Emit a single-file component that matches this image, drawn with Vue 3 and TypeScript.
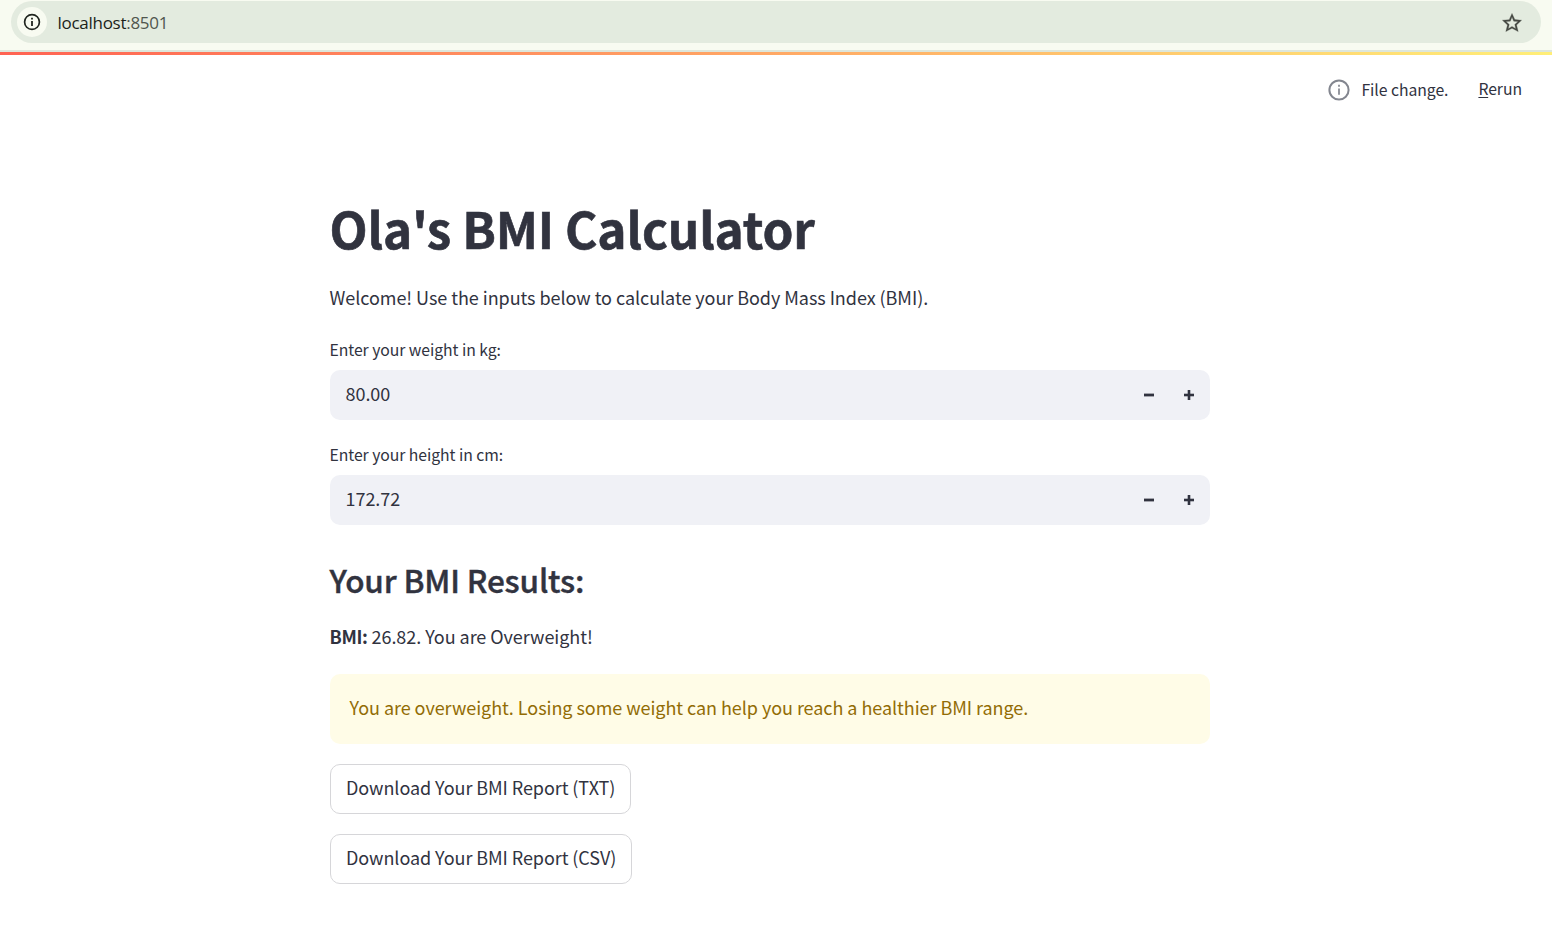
<script setup lang="ts">
import { ref, computed } from 'vue'

interface Field {
  id: string
  label: string
  value: number
}

const fields = ref<Field[]>([
  { id: 'weight', label: 'Enter your weight in kg:', value: 80 },
  { id: 'height', label: 'Enter your height in cm:', value: 172.72 },
])

const reports = ['TXT', 'CSV']

const bmi = computed<string>(() => {
  const metres = fields.value[1].value / 100
  return (fields.value[0].value / (metres * metres)).toFixed(2)
})

function step(field: Field, amount: number): void {
  field.value = Math.max(1, field.value + amount)
}
</script>

<template>
  <div class="page">
    <header class="toolbar">
      <div class="address">
        <span class="site-info">
          <svg width="18" height="18" viewBox="0 0 18 18" fill="none">
            <circle cx="9" cy="9" r="7.4" stroke="#20251f" stroke-width="1.7" />
            <path d="M9 8v5M9 4.8v1.8" stroke="#20251f" stroke-width="1.8" />
          </svg>
        </span>
        <span class="url">localhost<span class="port">:8501</span></span>
        <svg class="star" width="24" height="24" viewBox="0 0 24 24" fill="#444842" stroke="#444842" stroke-width="0.3">
          <path d="M21.6 9.24l-6.79-.62L12 2.4 9.19 8.63 2.4 9.24l5.06 4.73L5.82 20.6 12 17.27 18.18 20.6l-1.63-6.63L21.6 9.24zM12 15.4l-3.76 2.27 1-4.28-3.32-2.88 4.38-.38L12 6.1l1.71 4.04 4.38.38-3.32 2.88 1 4.28L12 15.4z" />
        </svg>
      </div>
    </header>
    <div class="decoration"></div>

    <div class="status">
      <svg class="status-icon" width="22" height="22" viewBox="0 0 22 22" fill="none">
        <circle cx="11" cy="11" r="9.6" stroke="#83868f" stroke-width="2" />
        <path d="M11 9.6v6.2M11 5.8v2" stroke="#83868f" stroke-width="1.7" />
      </svg>
      <span class="status-text">File change.</span>
      <span class="rerun"><u>R</u>erun</span>
    </div>

    <main class="content">
      <h1>Ola's BMI Calculator</h1>
      <p class="intro">Welcome! Use the inputs below to calculate your Body Mass Index (BMI).</p>

      <div v-for="field in fields" :key="field.id" class="field">
        <label>{{ field.label }}</label>
        <div class="number-input">
          <span class="value">{{ field.value.toFixed(2) }}</span>
          <button class="step" aria-label="Decrease" @click="step(field, -1)">
            <svg width="10" height="10" viewBox="0 0 10 10">
              <rect y="3.6" width="10" height="2.8" fill="#31333f" />
            </svg>
          </button>
          <button class="step" aria-label="Increase" @click="step(field, 1)">
            <svg width="10" height="10" viewBox="0 0 10 10" fill="#31333f">
              <rect y="3.7" width="10" height="2.6" />
              <rect x="3.7" width="2.6" height="10" />
            </svg>
          </button>
        </div>
      </div>

      <h2>Your BMI Results:</h2>
      <p class="result"><strong>BMI:</strong> {{ bmi }}. You are Overweight!</p>
      <div class="alert">You are overweight. Losing some weight can help you reach a healthier BMI range.</div>
      <div class="downloads">
        <button v-for="kind in reports" :key="kind" class="download">Download Your BMI Report ({{ kind }})</button>
      </div>
    </main>
  </div>
</template>

<style>
body {
  background: #fff;
}
</style>

<style scoped>
.page {
  height: 952px;
  overflow: hidden;
  background: #fff;
  color: #31333f;
  font-family: "Noto Sans CJK SC", "Noto Sans", sans-serif;
  font-size: 18px;
  line-height: 32px;
  letter-spacing: -0.05px;
}
.toolbar {
  box-sizing: border-box;
  height: 52px;
  padding: 1px 11px 0;
  background: #f8fbf1;
  border-bottom: 2px solid #dde6db;
}
.address {
  display: flex;
  align-items: center;
  box-sizing: border-box;
  height: 42px;
  padding: 0 17.5px 0 6px;
  border-radius: 21px;
  background: #e3ebdf;
}
.site-info {
  display: flex;
  align-items: center;
  justify-content: center;
  width: 30px;
  height: 30px;
  border-radius: 50%;
  background: #f8fbf1;
}
.url {
  flex: 1;
  padding: 1px 0 0 10.5px;
  font-family: "Open Sans", sans-serif;
  font-size: 17px;
  letter-spacing: -0.28px;
  color: #1b1f1a;
}
.port {
  color: #50564e;
}
.star {
  margin-top: 1px;
}
.decoration {
  height: 3px;
  background: linear-gradient(90deg, #ff6353, #ffee78);
}
.status {
  display: flex;
  align-items: center;
  justify-content: flex-end;
  height: 69px;
  padding-right: 30px;
  font-size: 15.75px;
}
.status-text {
  margin: 0 30px 0 11.5px;
}
.rerun {
  margin-top: -2px;
}
.rerun u {
  text-underline-offset: 2px;
  text-decoration-thickness: 1px;
}
.content {
  width: 880px;
  margin: 71px 0 0 330px;
}
h1,
h2,
p {
  margin: 0;
}
h1 {
  font-size: 49.5px;
  line-height: 66px;
  font-weight: 700;
  letter-spacing: -0.16px;
  -webkit-text-stroke: 0.6px #31333f;
}
.intro {
  margin: 20px 0 25px;
}
h1,
h2,
p,
label {
  text-indent: -0.5px;
}
.field {
  height: 105px;
}
label {
  display: block;
  height: 32px;
  font-size: 15.75px;
  line-height: 23px;
}
.number-input {
  display: flex;
  align-items: center;
  box-sizing: border-box;
  height: 50px;
  padding: 0 1px 0 15.5px;
  border-radius: 10px;
  background: #f0f1f6;
}
.value {
  flex: 1;
  padding-bottom: 4px;
}
.step {
  display: flex;
  align-items: center;
  justify-content: center;
  width: 40px;
  height: 50px;
  padding: 0;
  border: 0;
  background: transparent;
}
h2 {
  margin-top: 10px;
  font-size: 31.5px;
  line-height: 42px;
  font-weight: 500;
  letter-spacing: -0.16px;
  -webkit-text-stroke: 0.4px #31333f;
}
.result {
  margin-top: 20px;
}
.result strong {
  font-weight: 600;
  letter-spacing: -0.35px;
}
.alert {
  box-sizing: border-box;
  height: 70px;
  margin: 22px 0 20px;
  padding: 17px 19.5px;
  border-radius: 10px;
  background: #fffce7;
  color: #926c05;
}
.downloads {
  display: flex;
  flex-direction: column;
  align-items: flex-start;
  gap: 20px;
}
.download {
  box-sizing: border-box;
  height: 50px;
  padding: 0 15px 4px;
  border: 1px solid #d6d6d9;
  border-radius: 10px;
  background: #fff;
  color: inherit;
  font: inherit;
  letter-spacing: -0.07px;
}
</style>
